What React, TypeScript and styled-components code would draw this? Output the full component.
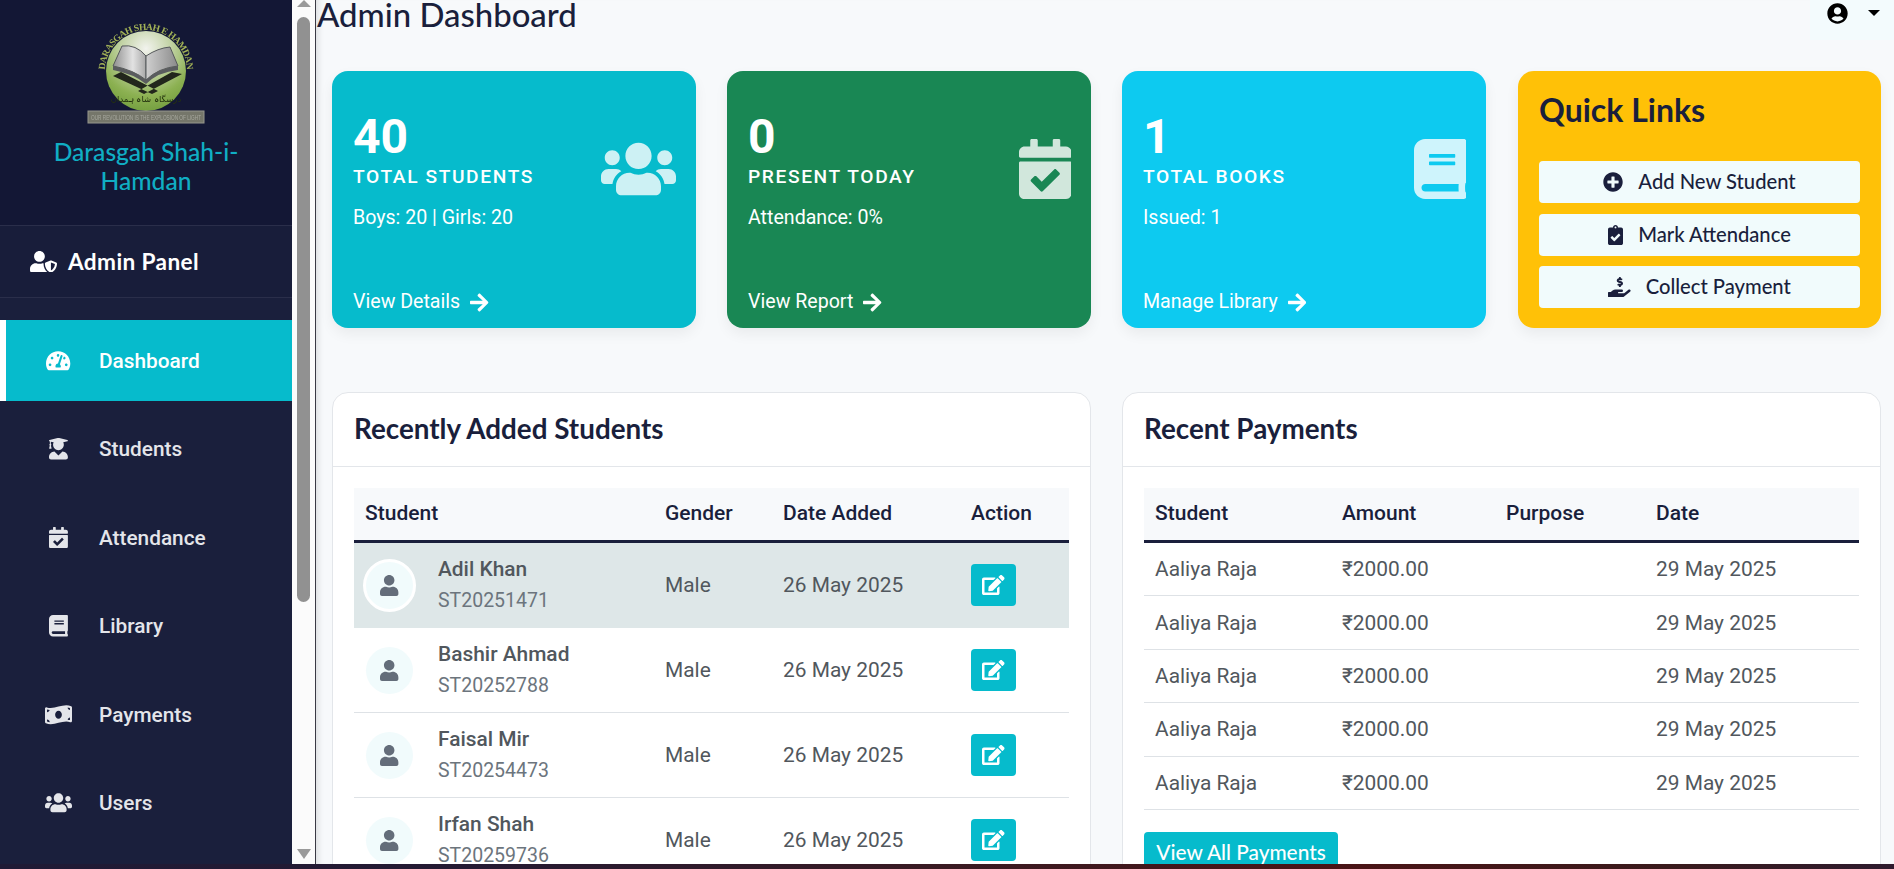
import React from "react";
import styled, { createGlobalStyle } from "styled-components";
import type { IconType } from "react-icons";
import {
  FaTachometerAlt, FaUserGraduate, FaCalendarCheck, FaBook, FaMoneyBillWave, FaUsers,
  FaUserShield, FaUserCircle, FaArrowRight, FaPlusCircle, FaClipboardCheck,
  FaHandHoldingUsd, FaEdit, FaUser,
} from "react-icons/fa";

const HEAD = `"Lato", "Noto Sans", sans-serif`;
const BODY = `"Roboto", "Liberation Sans", sans-serif`;

const Global = createGlobalStyle`
  html, body { margin: 0; padding: 0; height: 100%; overflow: hidden; background: #1f1a35; }
  * { box-sizing: border-box; }
  body { font-family: ${BODY}; }
`;

const Page = styled.div`
  width: 1894px; height: 869px; display: flex; flex-direction: column; overflow: hidden;
`;
const Win = styled.div`
  height: 864px; display: flex; overflow: hidden; flex: none;
`;
const Strip = styled.div`
  height: 5px; flex: none;
  background: linear-gradient(90deg, #1f1a35 0%, #251a33 25%, #3a1a22 50%, #4a1416 72%, #3a1a1c 88%, #2e1b2e 100%);
`;
const Sidebar = styled.aside`
  width: 292px; flex: none; background: #1a1f3c; display: flex; flex-direction: column; color: #fff;
`;
const Brand = styled.div`
  height: 226px; flex: none; background: #131735; border-bottom: 1px solid #2a2e4a;
  display: flex; flex-direction: column; align-items: center; padding: 20px 30px 0;
`;
const BrandName = styled.h1`
  margin: 11px 0 0; font: 500 24.6px/29px ${HEAD}; color: #10aec4; text-align: center;
`;
const Panel = styled.div`
  height: 72px; flex: none; display: flex; align-items: center; gap: 11px; padding-left: 30px;
  border-bottom: 1px solid #2a2e4a; background: #181d3a;
  font: 700 22.6px ${HEAD}; letter-spacing: .4px;
`;
const Nav = styled.nav`
  display: flex; flex-direction: column; gap: 7.5px; padding-top: 22px;
`;
const NavItem = styled.div<{ $active?: boolean }>`
  height: 81px; display: flex; align-items: center; flex: none;
  padding-left: ${p => (p.$active ? 39 : 45)}px;
  border-left: ${p => (p.$active ? "6px solid #fff" : "0")};
  background: ${p => (p.$active ? "#06bbcc" : "transparent")};
  color: ${p => (p.$active ? "#fff" : "#e4e5ea")};
  font: 500 20.8px ${BODY};
`;
const NavIcon = styled.span`
  width: 27px; margin-right: 27px; display: flex; justify-content: center;
`;
const Rail = styled.div`
  width: 24px; flex: none; background: #fbfbfb; border-right: 1px solid #3a3a44;
  display: flex; flex-direction: column; align-items: center;
`;
const ArrowUp = styled.div`
  flex: none; width: 0; height: 0; margin-bottom: 10px;
  border-left: 7px solid transparent; border-right: 7px solid transparent; border-bottom: 7px solid #9a9a9a;
`;
const Thumb = styled.div`
  width: 13px; height: 585px; flex: none; background: #919191; border-radius: 7px;
`;
const ArrowDown = styled.div`
  flex: none; width: 0; height: 0; margin-top: auto; margin-bottom: 5px;
  border-left: 7px solid transparent; border-right: 7px solid transparent; border-top: 10px solid #9a9a9a;
`;
const Main = styled.main`
  flex: 1; min-width: 0; background: #f7f9fb; overflow: hidden;
  box-shadow: inset 7px 0 6px -5px rgba(0,0,0,.12);
`;
const Topbar = styled.header`
  height: 71px; display: flex; justify-content: space-between; align-items: flex-start;
`;
const Title = styled.h2`
  margin: 0 0 0 1px; font: 500 32.9px/29px ${HEAD}; color: #1a1f3c;
`;
const UserMenu = styled.div`
  width: 84px; height: 40px; background: #f3fbfd; display: flex; align-items: flex-start; padding: 3px 0 0 17px;
  color: #000;
`;
const Caret = styled.span`
  width: 0; height: 0; margin: 7px 0 0 20px;
  border-left: 6px solid transparent; border-right: 6px solid transparent; border-top: 6px solid #000;
`;
const Stats = styled.section`
  display: grid; grid-template-columns: repeat(4, 364px); gap: 31px; margin-left: 16px;
`;
const Stat = styled.article<{ $bg: string }>`
  height: 257px; border-radius: 16px; background: ${p => p.$bg}; color: #fff; padding: 38px 20px 14px 21px;
  display: flex; flex-direction: column; box-shadow: 0 6px 14px rgba(0,0,0,.06);
`;
const StatTop = styled.div`
  display: flex; justify-content: space-between; align-items: flex-start;
`;
const StatNum = styled.div`
  font: 700 48px/55px ${BODY};
`;
const StatLabel = styled.div`
  font: 500 19.2px/26px ${BODY}; letter-spacing: 1.6px; text-transform: uppercase;
`;
const StatSub = styled.div`
  font: 400 19.6px/24px ${BODY}; margin-top: 16px;
`;
const StatIcon = styled.div`
  margin-top: 30px; opacity: .8; display: flex;
`;
const StatLink = styled.div`
  margin-top: auto; display: flex; align-items: center; gap: 10px; font: 400 19.6px/24px ${BODY};
`;
const Quick = styled.article`
  height: 257px; margin-left: 1px; border-radius: 16px; background: #ffc107; padding: 20px 21px; color: #1a1f3c;
  box-shadow: 0 6px 14px rgba(0,0,0,.06);
`;
const QuickTitle = styled.h3`
  margin: 0 0 32px; font: 700 32px/38px ${HEAD};
`;
const QuickList = styled.div`
  display: flex; flex-direction: column; gap: 10.5px;
`;
const QuickBtn = styled.div`
  height: 42px; border-radius: 4px; background: #f1fbfc; display: flex; align-items: center; justify-content: center;
  gap: 15px; font: 500 20.2px ${HEAD};
`;
const QuickText = styled.span`
  padding-bottom: 2px;
`;
const Tables = styled.section`
  display: grid; grid-template-columns: repeat(2, 759px); gap: 31px; margin: 64px 0 0 16px;
`;
const Card = styled.article`
  background: #fff; border: 1px solid #e3e6ea; border-radius: 16px; height: 520px; overflow: hidden;
`;
const CardHead = styled.h3`
  margin: 0; height: 74px; padding: 0 21px 3px; display: flex; align-items: center;
  font: 700 27.8px ${HEAD}; color: #1a1f3c; border-bottom: 1px solid #e3e6ea;
`;
const CardBody = styled.div`
  padding: 21px;
`;
const Table = styled.table`
  width: 100%; border-collapse: separate; border-spacing: 0; table-layout: fixed;
`;
const Th = styled.th<{ $w: number }>`
  width: ${p => p.$w}px; height: 55px; background: #f7f9fb; border-bottom: 3px solid #1a1f3c; text-align: left;
  padding: 0 11px 2px; font: 500 21px ${BODY}; color: #1a1f3c;
`;
const Td = styled.td`
  padding: 0 11px; font: 400 20.9px ${BODY}; color: #51575d; border-bottom: 1px solid #dee2e6;
`;
const Tr = styled.tr<{ $h: number; $hi?: boolean }>`
  height: ${p => p.$h}px;
  background: ${p => (p.$hi ? "#dee7e8" : "transparent")};
  td { border-bottom-color: ${p => (p.$hi ? "transparent" : "#dee2e6")}; }
`;
const Person = styled.div`
  display: flex; align-items: center;
`;
const Avatar = styled.div<{ $ring?: boolean }>`
  width: ${p => (p.$ring ? 53 : 47)}px; height: ${p => (p.$ring ? 53 : 47)}px; flex: none; border-radius: 50%;
  background: #f1fbfc; border: ${p => (p.$ring ? "3px solid #fff" : "0")};
  margin: ${p => (p.$ring ? "0 22px 0 -2px" : "0 25px 0 1px")};
  display: flex; align-items: center; justify-content: center; color: #646d7a;
`;
const NameBlock = styled.div`
  display: flex; flex-direction: column; gap: 8px;
`;
const Name = styled.span`
  font: 500 20.9px/24px ${BODY}; color: #51575d;
`;
const Code = styled.span`
  font: 400 19.5px/24px ${BODY}; color: #6c757d;
`;
const EditBtn = styled.div`
  width: 45px; height: 42px; border-radius: 4px; background: #06bbcc; color: #fff;
  display: flex; align-items: center; justify-content: center;
`;
const AllBtn = styled.div`
  width: 194px; height: 42px; margin-top: 22px; padding-bottom: 2px; border-radius: 4px; background: #06bbcc; color: #fff;
  display: flex; align-items: center; justify-content: center; font: 500 20.8px ${HEAD};
`;
const Glyph = styled.span<{ $w: number; $h: number }>`
  display: inline-flex; flex: none;
  svg { width: ${p => p.$w}px; height: ${p => p.$h}px; }
`;

/* Font Awesome glyphs are not square: width over height of each viewBox. */
const ratios = new Map<IconType, number>([
  [FaUsers, 1.25], [FaMoneyBillWave, 1.25], [FaUserShield, 1.25],
  [FaTachometerAlt, 1.125], [FaHandHoldingUsd, 1.125], [FaEdit, 1.125],
  [FaUserGraduate, 0.875], [FaCalendarCheck, 0.875], [FaBook, 0.875], [FaArrowRight, 0.875], [FaUser, 0.875],
  [FaClipboardCheck, 0.75],
]);
const Ico = ({ of: Icon, h }: { of: IconType; h: number }) => (
  <Glyph $w={h * (ratios.get(Icon) ?? 1)} $h={h}><Icon /></Glyph>
);

const Logo = () => (
  <svg width="120" height="106" viewBox="0 0 120 106" role="img" aria-label="Darasgah Shah E Hamdan logo">
    <defs>
      <radialGradient id="lg" cx="50%" cy="22%" r="85%">
        <stop offset="0%" stopColor="#f2f3ee" />
        <stop offset="35%" stopColor="#c4d4a8" />
        <stop offset="70%" stopColor="#8cb152" />
        <stop offset="100%" stopColor="#6d9a3a" />
      </radialGradient>
      <linearGradient id="pageL" x1="0" y1="0" x2="1" y2="0">
        <stop offset="0%" stopColor="#8e8e8e" />
        <stop offset="60%" stopColor="#e2e2e2" />
        <stop offset="100%" stopColor="#a8a8a8" />
      </linearGradient>
      <linearGradient id="pageR" x1="0" y1="0" x2="1" y2="0">
        <stop offset="0%" stopColor="#cfcfcf" />
        <stop offset="100%" stopColor="#8a8a8a" />
      </linearGradient>
      <path id="arc" d="M 19 51 A 41 41 0 0 1 101 51" />
      <filter id="soft"><feGaussianBlur stdDeviation="0.35" /></filter>
    </defs>
    <g filter="url(#soft)">
      <circle cx="60" cy="51" r="40" fill="url(#lg)" />
      <text fontFamily="Liberation Serif, serif" fontWeight="700" fontSize="9.5" fill="#a3b356">
        <textPath href="#arc" startOffset="50%" textAnchor="middle" textLength="126">DARASGAH SHAH E HAMDAN</textPath>
      </text>
      <path d="M27 56 L66 74 L72 71 L35 52 Z M96 54 L58 74 L52 71 L86 52 Z" fill="#20261a" />
      <path d="M36 26 Q50 24 60 36 L60 60 Q48 50 27 46 Z" fill="url(#pageL)" stroke="#55585a" strokeWidth="1" />
      <path d="M60 36 Q72 28 84 27 L92 46 Q72 48 60 60 Z" fill="url(#pageR)" stroke="#55585a" strokeWidth="1" />
      <path d="M27 46 L27 50 Q48 54 60 64 Q72 52 92 50 L92 46 Q72 48 60 60 Q48 50 27 46 Z" fill="#5a5c5e" />
      <text x="60" y="82" textAnchor="middle" fontFamily="DejaVu Sans, sans-serif" fontSize="8.5" fill="#23310f">درسگاہ شاہ ہمدان</text>
      <rect x="2" y="91" width="116" height="12" fill="#74766a" stroke="#96968c" />
      <text x="60" y="100" textAnchor="middle" fontFamily="Liberation Sans, sans-serif" fontSize="7.4" textLength="110" lengthAdjust="spacingAndGlyphs" fill="#a8a89e">OUR REVOLUTION IS THE EXPLOSION OF LIGHT</text>
    </g>
  </svg>
);

const navItems: { label: string; icon: IconType; active?: boolean }[] = [
  { label: "Dashboard", icon: FaTachometerAlt, active: true },
  { label: "Students", icon: FaUserGraduate },
  { label: "Attendance", icon: FaCalendarCheck },
  { label: "Library", icon: FaBook },
  { label: "Payments", icon: FaMoneyBillWave },
  { label: "Users", icon: FaUsers },
];
const stats: { n: string; label: string; sub: string; link: string; bg: string; icon: IconType }[] = [
  { n: "40", label: "Total Students", sub: "Boys: 20 | Girls: 20", link: "View Details", bg: "#06bbcc", icon: FaUsers },
  { n: "0", label: "Present Today", sub: "Attendance: 0%", link: "View Report", bg: "#198754", icon: FaCalendarCheck },
  { n: "1", label: "Total Books", sub: "Issued: 1", link: "Manage Library", bg: "#0dcaf0", icon: FaBook },
];
const students = [
  ["Adil Khan", "ST20251471"],
  ["Bashir Ahmad", "ST20252788"],
  ["Faisal Mir", "ST20254473"],
  ["Irfan Shah", "ST20259736"],
];

export default function App() {
  return (
    <Page>
      <Global />
      <Win>
        <Sidebar>
          <Brand>
            <Logo />
            <BrandName>Darasgah Shah-i-Hamdan</BrandName>
          </Brand>
          <Panel><Ico of={FaUserShield} h={21.6} />Admin Panel</Panel>
          <Nav>
            {navItems.map(i => (
              <NavItem key={i.label} $active={i.active}>
                <NavIcon><Ico of={i.icon} h={21.6} /></NavIcon>{i.label}
              </NavItem>
            ))}
          </Nav>
        </Sidebar>
        <Rail><ArrowUp /><Thumb /><ArrowDown /></Rail>
        <Main>
          <Topbar>
            <Title>Admin Dashboard</Title>
            <UserMenu><Ico of={FaUserCircle} h={21} /><Caret /></UserMenu>
          </Topbar>
          <Stats>
            {stats.map(s => (
              <Stat key={s.label} $bg={s.bg}>
                <StatTop>
                  <div>
                    <StatNum>{s.n}</StatNum>
                    <StatLabel>{s.label}</StatLabel>
                    <StatSub>{s.sub}</StatSub>
                  </div>
                  <StatIcon><Ico of={s.icon} h={60} /></StatIcon>
                </StatTop>
                <StatLink>{s.link}<Ico of={FaArrowRight} h={21} /></StatLink>
              </Stat>
            ))}
            <Quick>
              <QuickTitle>Quick Links</QuickTitle>
              <QuickList>
                <QuickBtn><Ico of={FaPlusCircle} h={20} /><QuickText>Add New Student</QuickText></QuickBtn>
                <QuickBtn><Ico of={FaClipboardCheck} h={20} /><QuickText>Mark Attendance</QuickText></QuickBtn>
                <QuickBtn><Ico of={FaHandHoldingUsd} h={20} /><QuickText>Collect Payment</QuickText></QuickBtn>
              </QuickList>
            </Quick>
          </Stats>
          <Tables>
            <Card>
              <CardHead>Recently Added Students</CardHead>
              <CardBody>
                <Table>
                  <thead>
                    <tr><Th $w={300}>Student</Th><Th $w={118}>Gender</Th><Th $w={188}>Date Added</Th><Th $w={109}>Action</Th></tr>
                  </thead>
                  <tbody>
                    {students.map(([n, c], i) => (
                      <Tr key={c} $h={85} $hi={i === 0}>
                        <Td>
                          <Person>
                            <Avatar $ring={i === 0}><Ico of={FaUser} h={21} /></Avatar>
                            <NameBlock><Name>{n}</Name><Code>{c}</Code></NameBlock>
                          </Person>
                        </Td>
                        <Td>Male</Td>
                        <Td>26 May 2025</Td>
                        <Td><EditBtn><Ico of={FaEdit} h={20} /></EditBtn></Td>
                      </Tr>
                    ))}
                  </tbody>
                </Table>
              </CardBody>
            </Card>
            <Card>
              <CardHead>Recent Payments</CardHead>
              <CardBody>
                <Table>
                  <thead>
                    <tr><Th $w={187}>Student</Th><Th $w={164}>Amount</Th><Th $w={150}>Purpose</Th><Th $w={214}>Date</Th></tr>
                  </thead>
                  <tbody>
                    {[1, 2, 3, 4, 5].map(i => (
                      <Tr key={i} $h={53.4}>
                        <Td>Aaliya Raja</Td><Td>₹2000.00</Td><Td></Td><Td>29 May 2025</Td>
                      </Tr>
                    ))}
                  </tbody>
                </Table>
                <AllBtn>View All Payments</AllBtn>
              </CardBody>
            </Card>
          </Tables>
        </Main>
      </Win>
      <Strip />
    </Page>
  );
}
